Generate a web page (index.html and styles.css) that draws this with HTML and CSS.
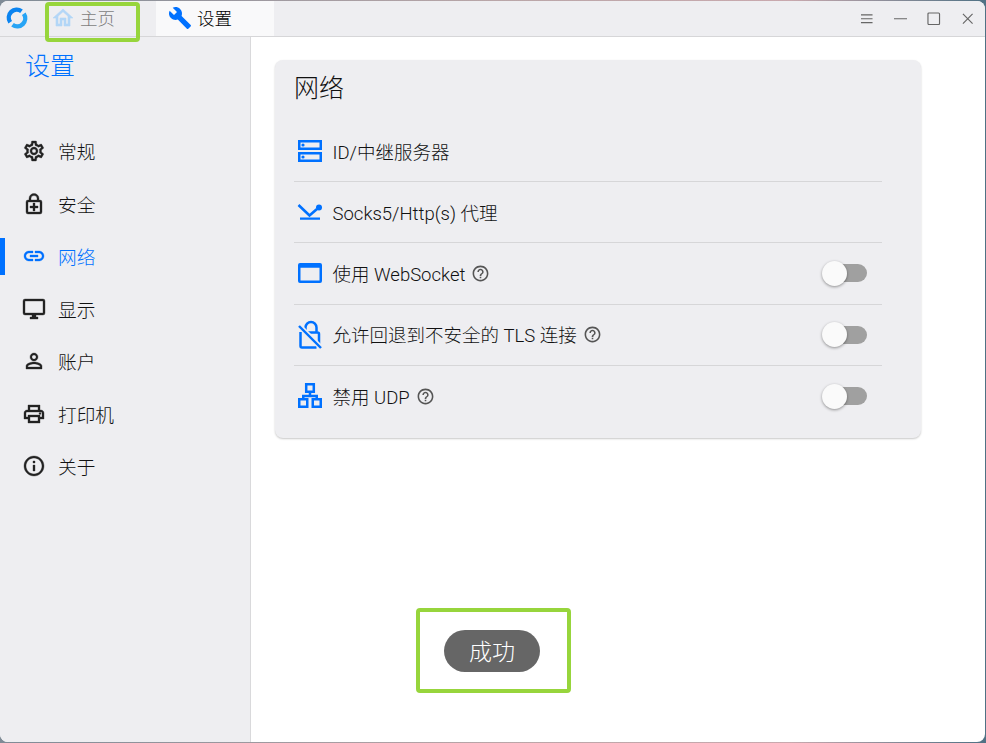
FILE: index.html
```html
<!DOCTYPE html>
<html lang="zh">
<head>
<meta charset="utf-8">
<title>设置</title>
<link rel="stylesheet" href="styles.css">
</head>
<body>
<div class="window">
  <header class="titlebar">
    <svg class="logo" viewBox="0 0 24 24"><path d="M5.200 16.200A8 8 0 0 1 16.500 5.200" fill="none" stroke="#0b84f0" stroke-width="4.400"/><path d="M18.800 7.800A8 8 0 0 1 7.500 18.800" fill="none" stroke="#27a4f5" stroke-width="4.400"/></svg>
    <div class="tab tab-home">
      <svg class="tab-icon" viewBox="0 0 24 24"><path fill="#b3d6f7" stroke="#b3d6f7" stroke-width="0.600" d="M12 5.690l5 4.500V18h-2v-6H9v6H7v-7.810l5-4.500M12 3L2 12h3v8h6v-6h2v6h6v-8h3L12 3z"/></svg>
      <span>主页</span>
    </div>
    <div class="tab tab-active">
      <svg class="tab-icon" viewBox="0 0 24 24"><path fill="#0071ff" d="M22.700 19l-9.100-9.100c.9-2.300.4-5-1.500-6.900-2-2-5-2.400-7.400-1.300L9 6 6 9 1.600 4.700C.4 7.100.9 10.100 2.900 12.100c1.900 1.900 4.600 2.400 6.900 1.500l9.100 9.100c.4.400 1 .4 1.400 0l2.300-2.300c.5-.4.5-1.100.1-1.400z"/></svg>
      <span>设置</span>
    </div>
    <div class="controls">
      <svg viewBox="0 0 14 14"><path d="M1 3h12M1 7h12M1 11h12" stroke="#666" stroke-width="1.200" fill="none"/></svg>
      <svg viewBox="0 0 14 14"><path d="M0 7h14" stroke="#666" stroke-width="1.100" fill="none"/></svg>
      <svg viewBox="0 0 14 14"><rect x="1" y="1" width="12" height="12" rx="1" stroke="#666" stroke-width="1.200" fill="none"/></svg>
      <svg viewBox="0 0 14 14"><path d="M2 2l10 10M12 2L2 12" stroke="#666" stroke-width="1.200" fill="none"/></svg>
    </div>
  </header>
  <div class="body">
    <aside class="sidebar">
      <h1 class="side-title">设置</h1>
      <nav class="menu">
        <div class="menu-item">
          <svg class="menu-icon" viewBox="0 0 24 24"><path d="M19.430 12.980c.04-.32.07-.64.07-.98 0-.34-.03-.66-.07-.98l2.110-1.650c.19-.15.24-.42.12-.64l-2-3.460c-.09-.16-.26-.25-.44-.25-.06 0-.12.01-.17.03l-2.490 1c-.52-.4-1.080-.73-1.690-.98l-.38-2.650C14.460 2.180 14.250 2 14 2h-4c-.25 0-.46.18-.49.42l-.38 2.650c-.61.25-1.170.59-1.690.98l-2.490-1c-.06-.02-.12-.03-.18-.03-.17 0-.34.09-.43.25l-2 3.460c-.13.22-.07.49.12.64l2.110 1.650c-.04.32-.07.65-.07.98 0 .33.03.66.07.98l-2.110 1.650c-.19.15-.24.42-.12.64l2 3.460c.09.16.26.25.44.25.06 0 .12-.01.17-.03l2.490-1c.52.4 1.080.73 1.690.98l.38 2.650c.03.24.24.42.49.42h4c.25 0 .46-.18.49-.42l.38-2.650c.61-.25 1.170-.59 1.690-.98l2.490 1c.06.02.12.03.18.03.17 0 .34-.09.43-.25l2-3.460c.12-.22.07-.49-.12-.64l-2.110-1.650zm-1.980-1.710c.04.31.05.52.05.73 0 .21-.02.43-.05.73l-.14 1.130.89.7 1.080.84-.7 1.210-1.270-.51-1.040-.42-.9.68c-.43.32-.84.56-1.250.73l-1.060.43-.16 1.130-.2 1.350h-1.400l-.19-1.350-.16-1.130-1.060-.43c-.43-.18-.83-.41-1.230-.71l-.91-.7-1.060.43-1.270.51-.7-1.210 1.080-.84.89-.7-.14-1.130c-.03-.31-.05-.54-.05-.74s.02-.43.05-.73l.14-1.130-.89-.7-1.080-.84.7-1.210 1.270.51 1.040.42.9-.68c.43-.32.84-.56 1.250-.73l1.060-.43.16-1.130.2-1.350h1.390l.19 1.350.16 1.130 1.060.43c.43.18.83.41 1.230.71l.91.7 1.060-.43 1.270-.51.7 1.210-1.070.85-.89.7.14 1.130zM12 8c-2.210 0-4 1.790-4 4s1.790 4 4 4 4-1.790 4-4-1.790-4-4-4zm0 6c-1.100 0-2-.9-2-2s.9-2 2-2 2 .9 2 2-.9 2-2 2z"/></svg>
          <span>常规</span>
        </div>
        <div class="menu-item">
          <svg class="menu-icon" viewBox="0 0 24 24"><path d="M18 8h-1V6.500a5 5 0 0 0-10 0V8H6a2 2 0 0 0-2 2v10a2 2 0 0 0 2 2h12a2 2 0 0 0 2-2V10a2 2 0 0 0-2-2zM9 6.500a3 3 0 0 1 6 0V8H9zM18 20H6V10h12zm-7-9h2v3h3v2h-3v3h-2v-3H8v-2h3z"/></svg>
          <span>安全</span>
        </div>
        <div class="menu-item is-active">
          <svg class="menu-icon" viewBox="0 0 24 24"><path d="M3.900 12c0-1.710 1.390-3.100 3.100-3.100h4V7H7c-2.760 0-5 2.240-5 5s2.240 5 5 5h4v-1.900H7c-1.710 0-3.100-1.390-3.100-3.100zM8 13h8v-2H8v2zm9-6h-4v1.900h4c1.710 0 3.100 1.390 3.100 3.100s-1.390 3.100-3.100 3.100h-4V17h4c2.760 0 5-2.240 5-5s-2.240-5-5-5z"/></svg>
          <span>网络</span>
        </div>
        <div class="menu-item">
          <svg class="menu-icon" viewBox="0 0 24 24"><path d="M21 2H3a2 2 0 0 0-2 2v12a2 2 0 0 0 2 2h7v2H8v2h8v-2h-2v-2h7a2 2 0 0 0 2-2V4a2 2 0 0 0-2-2zm0 14H3V4h18z"/></svg>
          <span>显示</span>
        </div>
        <div class="menu-item">
          <svg class="menu-icon" viewBox="0 0 24 24"><path d="M12 5.900c1.160 0 2.100.94 2.100 2.100s-.94 2.100-2.100 2.100S9.900 9.160 9.900 8s.94-2.100 2.100-2.100m0 9c2.970 0 6.100 1.460 6.100 2.100v1.100H5.900V17c0-.64 3.130-2.100 6.100-2.100M12 4C9.790 4 8 5.790 8 8s1.790 4 4 4 4-1.790 4-4-1.790-4-4-4zm0 9c-2.670 0-8 1.340-8 4v3h16v-3c0-2.660-5.330-4-8-4z"/></svg>
          <span>账户</span>
        </div>
        <div class="menu-item">
          <svg class="menu-icon" viewBox="0 0 24 24"><path d="M19 8h-1V3H6v5H5c-1.660 0-3 1.340-3 3v6h4v4h12v-4h4v-6c0-1.660-1.340-3-3-3zM8 5h8v3H8V5zm8 12v2H8v-4h8v2zm2-2v-2H6v2H4v-4c0-.55.45-1 1-1h14c.55 0 1 .45 1 1v4h-2z"/><circle cx="18" cy="11.500" r="1"/></svg>
          <span>打印机</span>
        </div>
        <div class="menu-item">
          <svg class="menu-icon" viewBox="0 0 24 24"><path d="M11 7h2v2h-2zm0 4h2v6h-2zm1-9C6.480 2 2 6.480 2 12s4.480 10 10 10 10-4.480 10-10S17.520 2 12 2zm0 18c-4.410 0-8-3.590-8-8s3.590-8 8-8 8 3.590 8 8-3.590 8-8 8z"/></svg>
          <span>关于</span>
        </div>
      </nav>
    </aside>
    <main class="content">
      <section class="card">
        <h2 class="card-title">网络</h2>
        <div class="row">
          <svg class="row-icon" viewBox="0 0 24 24"><path fill-rule="evenodd" d="M0 1h24v10H0zm2.500 2.500v5h19v-5zM0 13h24v10H0zm2.500 2.500v5h19v-5z"/><circle cx="5" cy="6" r="1.600"/><circle cx="5" cy="18" r="1.600"/></svg>
          <span>ID/中继服务器</span>
        </div>
        <div class="row">
          <svg class="row-icon" viewBox="0 0 24 24"><path d="M0.500 5l11 10.500L19 9" fill="none" stroke="#0071ff" stroke-width="2.600"/><circle cx="21" cy="7.500" r="3"/><path d="M2 17.500h20v2.300H2z"/></svg>
          <span>Socks5/Http(s) 代理</span>
        </div>
        <div class="row">
          <svg class="row-icon" viewBox="0 0 24 24"><path fill-rule="evenodd" d="M2 2h20a2 2 0 0 1 2 2v16a2 2 0 0 1-2 2H2a2 2 0 0 1-2-2V4a2 2 0 0 1 2-2zm.500 4.800v12.700h19V6.800z"/></svg>
          <span>使用 WebSocket</span>
          <svg class="help" viewBox="0 0 24 24"><path d="M11 18h2v-2h-2v2zm1-16C6.480 2 2 6.480 2 12s4.480 10 10 10 10-4.480 10-10S17.520 2 12 2zm0 18c-4.410 0-8-3.590-8-8s3.590-8 8-8 8 3.590 8 8-3.590 8-8 8zm0-14c-2.210 0-4 1.790-4 4h2c0-1.100.9-2 2-2s2 .9 2 2c0 2-3 1.750-3 5h2c0-2.250 3-2.500 3-5 0-2.210-1.790-4-4-4z"/></svg>
          <div class="switch"><i class="thumb"></i></div>
        </div>
        <div class="row">
          <svg class="row-icon" viewBox="0 0 24 24"><path d="M7.500 9.500V4.500a5.500 5.500 0 0 1 11 0v5M7.500 9.500h12a1.500 1.500 0 0 1 1.500 1.500v12.500M18.500 24.500H4a1.500 1.500 0 0 1-1.500-1.500V9" fill="none" stroke="#0071ff" stroke-width="2.500"/><path d="M0 1.500l23 23" fill="none" stroke="#eeeef1" stroke-width="5"/><path d="M1 3l22 22" fill="none" stroke="#0071ff" stroke-width="2.400"/></svg>
          <span>允许回退到不安全的 TLS 连接</span>
          <svg class="help" viewBox="0 0 24 24"><path d="M11 18h2v-2h-2v2zm1-16C6.480 2 2 6.480 2 12s4.480 10 10 10 10-4.480 10-10S17.520 2 12 2zm0 18c-4.410 0-8-3.590-8-8s3.590-8 8-8 8 3.590 8 8-3.590 8-8 8zm0-14c-2.210 0-4 1.790-4 4h2c0-1.100.9-2 2-2s2 .9 2 2c0 2-3 1.750-3 5h2c0-2.250 3-2.500 3-5 0-2.210-1.790-4-4-4z"/></svg>
          <div class="switch"><i class="thumb"></i></div>
        </div>
        <div class="row">
          <svg class="row-icon" viewBox="0 0 24 24"><path d="M8.200 0.200h7.600v7.600H8.200zM1.250 15.250h8v7.500h-8zM14.750 15.250h8v7.500h-8zM12 8v4M5.250 15v-3h13.500v3" fill="none" stroke="#0071ff" stroke-width="2.500"/></svg>
          <span>禁用 UDP</span>
          <svg class="help" viewBox="0 0 24 24"><path d="M11 18h2v-2h-2v2zm1-16C6.480 2 2 6.480 2 12s4.480 10 10 10 10-4.480 10-10S17.520 2 12 2zm0 18c-4.410 0-8-3.590-8-8s3.590-8 8-8 8 3.590 8 8-3.590 8-8 8zm0-14c-2.210 0-4 1.790-4 4h2c0-1.100.9-2 2-2s2 .9 2 2c0 2-3 1.750-3 5h2c0-2.250 3-2.500 3-5 0-2.210-1.790-4-4-4z"/></svg>
          <div class="switch"><i class="thumb"></i></div>
        </div>
      </section>
    </main>
  </div>
  <div class="toast">成功</div>
  <div class="mark mark-home"></div>
  <div class="mark mark-toast"></div>
</div>
</body>
</html>
```
FILE: styles.css
```css
* { box-sizing: border-box; }
html, body { margin: 0; height: 100%; overflow: hidden; }
body {
  background: linear-gradient(90deg, #7f8b96 0%, #b9a6a8 50%, #c9a9ae 80%, #4f7184 100%);
  font-family: Roboto, "Noto Sans CJK SC", sans-serif;
  font-weight: 300;
  color: #111;
  padding: 1px 1px 1px 0;
}
.window {
  position: relative;
  height: 741px;
  background: #fff;
  border-radius: 8px;
  overflow: hidden;
  display: flex;
  flex-direction: column;
}
.titlebar {
  height: 36px;
  flex: none;
  display: flex;
  align-items: stretch;
  background: #eeeef1;
  border-bottom: 1px solid #d6d6d8;
}
.logo { width: 24px; height: 24px; margin: 5px 0 0 5px; flex: none; }
.tab {
  display: flex;
  align-items: center;
  font-size: 17.500px;
  white-space: nowrap;
}
.tab span { padding-bottom: 3px; }
.tab-home { margin-left: 22px; width: 105px; padding-left: 0; color: #7d7d7d; gap: 5px; }
.tab-active { width: 118px; padding-left: 12px; gap: 5px; background: #f9f9fa; color: #000; }
.tab-icon { width: 24px; height: 24px; flex: none; margin-bottom: 2px; }
.controls {
  margin-left: auto;
  display: flex;
  align-items: center;
  gap: 20px;
  padding: 0 11px 0 0;
}
.controls svg { width: 13.500px; height: 13.500px; }
.body { flex: 1; display: flex; min-height: 0; }
.sidebar {
  width: 251px;
  flex: none;
  background: #eeeef1;
  border-right: 1px solid #d9d9db;
}
.side-title {
  margin: 0;
  padding: 13px 0 0 25px;
  height: 88px;
  font-size: 25px;
  font-weight: 300;
  line-height: 34px;
  color: #0071ff;
}
.menu { display: flex; flex-direction: column; }
.menu-item {
  position: relative;
  height: 52.500px;
  display: flex;
  align-items: center;
  padding-left: 22px;
  gap: 12px;
  font-size: 18.700px;
}
.menu-item span, .row span { padding-bottom: 1px; }
.menu-icon { width: 24px; height: 24px; flex: none; fill: #222; stroke: #222; stroke-width: 0.350; }
.is-active { color: #0071ff; }
.is-active .menu-icon { fill: #0071ff; stroke: #0071ff; }
.is-active::before {
  content: "";
  position: absolute;
  left: 0;
  top: 8px;
  bottom: 8px;
  width: 5px;
  background: #0071ff;
}
.content { flex: 1; padding: 23px 64px 0 24px; }
.card {
  height: 378px;
  padding: 0 39px 0 19px;
  background: #eeeef1;
  border-radius: 8px;
  box-shadow: 0 1px 2px rgba(0, 0, 0, 0.22);
}
.card-title {
  margin: 0;
  height: 61px;
  padding-top: 12px;
  font-size: 25px;
  line-height: 34px;
  font-weight: 300;
}
.row {
  height: 61.200px;
  display: flex;
  align-items: center;
  padding-left: 4px;
  font-size: 18.500px;
  border-bottom: 1px solid #d6d6d8;
}
.row:last-child { border-bottom: 0; }
.row-icon { width: 24px; height: 24px; flex: none; fill: #0071ff; margin-right: 10.500px; overflow: visible; }
.help { width: 19px; height: 19px; fill: #555; margin-left: 6px; flex: none; }
.switch {
  position: relative;
  margin-left: auto;
  margin-right: 15px;
  width: 41px;
  height: 18px;
  background: #a0a0a0;
  border-radius: 9px;
}
.thumb {
  position: absolute;
  left: -4px;
  top: -3.500px;
  width: 25px;
  height: 25px;
  border-radius: 50%;
  background: #fafafa;
  box-shadow: 0 1px 3px rgba(0, 0, 0, 0.4);
}
.toast {
  position: absolute;
  left: 444px;
  top: 629px;
  width: 96px;
  height: 42px;
  border-radius: 21px;
  background: #666;
  color: #fff;
  font-size: 23px;
  line-height: 46px;
  text-align: center;
}
.mark {
  position: absolute;
  border: 4.500px solid #97d53c;
  border-radius: 4px;
}
.mark-home { left: 45px; top: 1px; width: 95px; height: 40px; }
.mark-toast { left: 416px; top: 607px; width: 155px; height: 85px; }
```
